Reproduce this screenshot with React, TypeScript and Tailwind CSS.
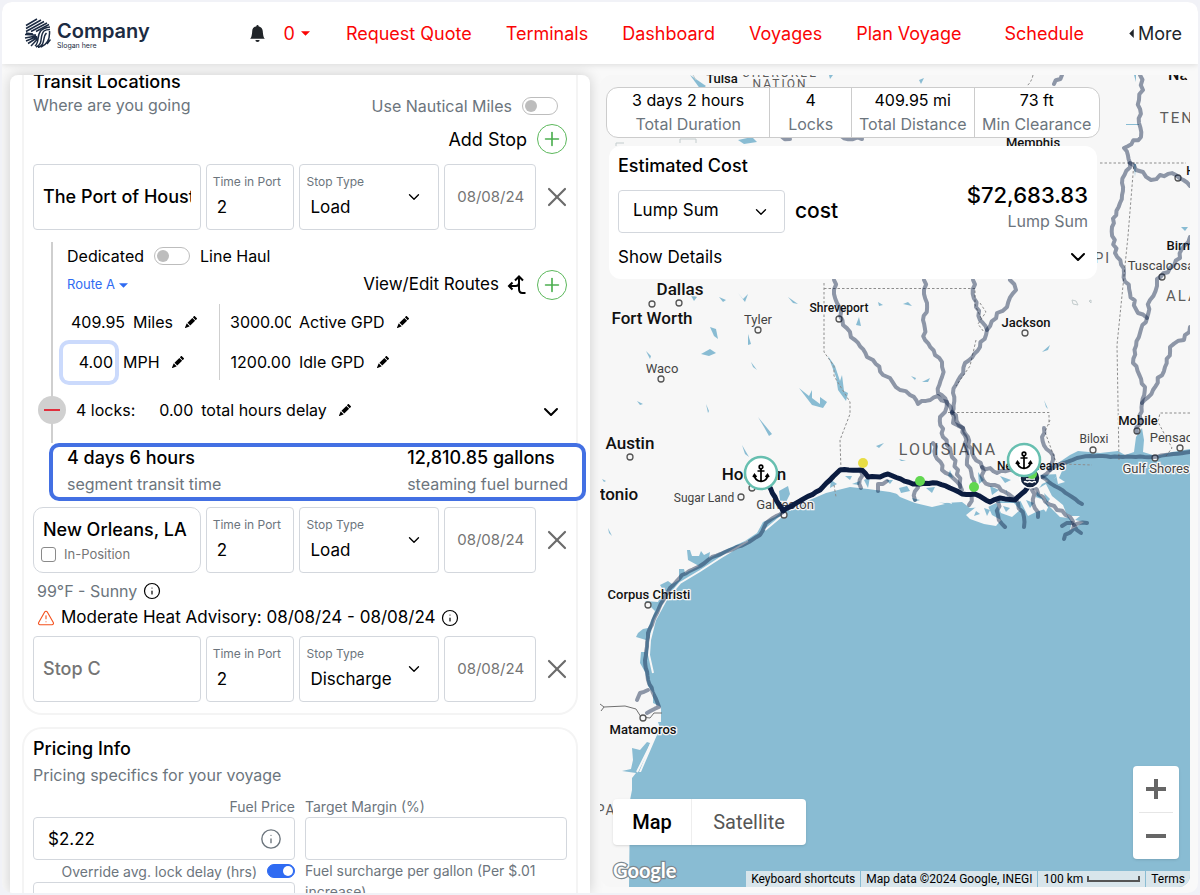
import { useState, type ReactNode } from 'react';
import clsx from 'clsx';
import { BsBellFill, BsPencilFill } from 'react-icons/bs';
import { ChevronDown, Info, Plus, TriangleAlert, X } from 'lucide-react';

type Point = [number, number];

const NAV_LINKS = ['Request Quote', 'Terminals', 'Dashboard', 'Voyages', 'Plan Voyage', 'Schedule'];

const STATS = [
  { value: '3 days 2 hours', label: 'Total Duration' },
  { value: '4', label: 'Locks' },
  { value: '409.95 mi', label: 'Total Distance' },
  { value: '73 ft', label: 'Min Clearance' },
];

/* ---------- small controls ---------- */

function Toggle({ label, on = false, small = false }: { label: string; on?: boolean; small?: boolean }) {
  const [checked, setChecked] = useState(on);
  return (
    <span className={clsx('relative inline-flex shrink-0', small ? 'h-3.5 w-7' : 'h-[18px] w-9')}>
      <input
        type="checkbox"
        role="switch"
        aria-label={label}
        checked={checked}
        onChange={(e) => setChecked(e.target.checked)}
        className="h-full w-full cursor-pointer appearance-none rounded-full border border-[#bdbdbd] bg-white checked:border-[#2f6bf2] checked:bg-[#2f6bf2]"
      />
      <span
        className={clsx(
          'pointer-events-none absolute rounded-full',
          small ? 'top-0.5 size-2.5' : 'top-[3px] size-3',
          checked ? 'right-0.5 bg-white' : 'left-[3px] bg-[#bdbdbd]'
        )}
      />
    </span>
  );
}

function AddButton({ label }: { label: string }) {
  return (
    <button
      aria-label={label}
      className="flex size-[30px] shrink-0 items-center justify-center rounded-full border border-[#5cb85c] text-[#4caf50]"
    >
      <Plus size={22} strokeWidth={1.8} />
    </button>
  );
}

function Caret({ className }: { className?: string }) {
  return (
    <svg viewBox="0 0 10 5" className={clsx('h-[5px] w-[9px] fill-current', className)} aria-hidden>
      <path d="M0 0h10L5 5z" />
    </svg>
  );
}

function EditableValue({ value, unit, width, focused }: { value: string; unit: string; width: string; focused?: boolean }) {
  return (
    <label className="flex items-center">
      <input
        defaultValue={value}
        aria-label={unit}
        className={clsx(
          'bg-transparent text-right text-[16px] outline-none',
          width,
          focused && 'h-[37px] rounded-md pr-0.5 ring-4 ring-[#cbdafc]'
        )}
      />
      <span className="ml-2 whitespace-nowrap">{unit}</span>
      <BsPencilFill size={12} className="ml-3" aria-hidden />
    </label>
  );
}

/* ---------- stops ---------- */

interface StopProps {
  name?: string;
  placeholder?: string;
  type: string;
  inPosition?: boolean;
}

function StopRow({ name, placeholder, type, inPosition }: StopProps) {
  const box = 'h-[66px] min-w-0 rounded border border-[#d3d7dd]';
  return (
    <div className="grid grid-cols-[168fr_89fr_140fr_92fr_25fr] items-center gap-[5px]">
      <div className={clsx(box, 'flex flex-col justify-center px-[9px]', inPosition && 'rounded-[10px] pt-1')}>
        <input
          defaultValue={name}
          placeholder={placeholder}
          aria-label="Stop name"
          className="w-full min-w-0 bg-transparent text-[18px] leading-6 font-medium outline-none placeholder:text-[#757575]"
        />
        {inPosition && (
          <label className="flex items-center gap-2 text-[13px] leading-6 text-[#757575]">
            <input
              type="checkbox"
              className="-ml-0.5 size-[15px] appearance-none rounded-[3px] border border-[#8a8a8a] bg-white checked:bg-[#2f6bf2]"
            />
            In-Position
          </label>
        )}
      </div>
      <label className={clsx(box, 'flex flex-col px-1.5 pt-2')}>
        <span className="text-[12px] leading-[18px] whitespace-nowrap text-[#6c757d]">Time in Port</span>
        <input defaultValue="2" className="w-full px-1 text-[17px] leading-8 outline-none" />
      </label>
      <label className={clsx(box, 'relative flex flex-col px-1.5 pt-2')}>
        <span className="text-[12px] leading-[18px] text-[#6c757d]">Stop Type</span>
        <select defaultValue={type} className="w-full appearance-none bg-transparent px-1 text-[17px] leading-8 outline-none">
          <option>Load</option>
          <option>Discharge</option>
        </select>
        <ChevronDown size={18} strokeWidth={1.8} className="pointer-events-none absolute top-[23px] right-[15px]" />
      </label>
      <div className={clsx(box, 'flex items-center')}>
        <input
          defaultValue="08/08/24"
          aria-label="Date"
          className="w-full min-w-0 pl-3 text-[15px] text-[#757575] outline-none"
        />
      </div>
      <button aria-label="Remove stop" className="-mr-1.5 flex justify-end text-[#6b6b6b]">
        <X size={32} strokeWidth={1.6} className="shrink-0" />
      </button>
    </div>
  );
}

function Segment() {
  return (
    <div className="relative pt-3 pl-[34px] text-[16px]">
      <div className="absolute top-3 bottom-0 left-[18px] w-0.5 bg-[#cfcfcf]" />
      <div className="flex h-7 items-center gap-2.5 text-[16px]">
        <span>Dedicated</span>
        <Toggle label="Dedicated or line haul" />
        <span>Line Haul</span>
      </div>
      <div className="flex h-[30px] items-center justify-between">
        <button className="flex items-center gap-1 text-[13px] text-[#2f6bf2]">
          Route A
          <Caret className="w-2" />
        </button>
        <div className="flex items-center gap-2.5">
          <a href="#routes" className="flex items-center gap-2 text-[17px]">
            View/Edit Routes
            <svg viewBox="0 0 20 20" className="size-5 fill-none stroke-black stroke-2" aria-hidden>
              <path d="M12 2V14C12 17 13 18 15.500 18H18.500M8 5.500L12 1.500L16 5.500M12 7.500C12 10 11 11 8.500 11H2M5.500 7.500L2 11L5.500 14.500" />
            </svg>
          </a>
          <AddButton label="Add route" />
        </div>
      </div>
      <div className="mt-0.5 flex">
        <div className="mt-0.5 mb-2 -ml-1 flex h-[76px] w-[157px] flex-col justify-between border-r border-[#cfcfcf]">
          <div className="flex h-9 items-center">
            <EditableValue value="409.95" unit="Miles" width="w-[62px] pl-2" />
          </div>
          <div className="flex h-9 items-center">
            <EditableValue value="4.00" unit="MPH" width="w-[52px]" focused />
          </div>
        </div>
        <div className="ml-2.5 flex h-20 flex-col justify-between">
          <div className="flex h-10 items-center">
            <EditableValue value="3000.00" unit="Active GPD" width="w-[61px]" />
          </div>
          <div className="flex h-10 items-center">
            <EditableValue value="1200.00" unit="Idle GPD" width="w-[61px]" />
          </div>
        </div>
      </div>
      <div className="relative -ml-7 flex h-[55px] items-center pb-3">
        <button
          aria-label="Remove segment"
          className="-ml-px flex size-7 shrink-0 items-center justify-center rounded-full bg-[#d0d0d0]"
        >
          <span className="h-0.5 w-4 bg-[#e02f3d]" />
        </button>
        <span className="ml-2.5">4 locks:</span>
        <span className="ml-[22px]">
          <EditableValue value="0.00" unit="total hours delay" width="w-9" />
        </span>
        <button aria-label="Show locks" className="ml-auto pt-1 pr-1">
          <ChevronDown size={24} />
        </button>
      </div>
    </div>
  );
}

function SegmentSummary() {
  return (
    <div className="relative -mr-[19px] mb-1.5 ml-4 flex h-[58px] items-center justify-between rounded-[10px] border-4 border-[#4370e3] bg-white px-3.5">
      <div>
        <div className="text-[18px] leading-6 font-medium">4 days 6 hours</div>
        <div className="text-[16px] leading-7 text-[#6c757d]">segment transit time</div>
      </div>
      <div>
        <div className="text-[18px] leading-6 font-medium">12,810.85 gallons</div>
        <div className="text-[16px] leading-7 text-[#6c757d]">steaming fuel burned</div>
      </div>
    </div>
  );
}

function TransitLocations() {
  return (
    <section className="rounded-b-[20px] border-2 border-t-0 border-[#f4f4f4] px-[9px] pb-[11px]">
      <div className="flex items-start justify-between">
        <div>
          <h2 className="text-[18px] leading-3.5 font-medium">Transit Locations</h2>
          <p className="mt-1 text-[16px] leading-6 text-[#6c757d]">Where are you going</p>
        </div>
        <div className="mt-[17px] mr-[9px] flex items-center gap-2.5 text-[16px] leading-7 text-[#6c757d]">
          Use Nautical Miles
          <Toggle label="Use Nautical Miles" />
        </div>
      </div>
      <div className="mt-1 mb-2.5 flex items-center justify-end gap-2.5 text-[18px]">
        Add Stop
        <AddButton label="Add stop" />
      </div>
      <StopRow name="The Port of Houston" type="Load" />
      <Segment />
      <SegmentSummary />
      <StopRow name="New Orleans, LA" type="Load" inPosition />
      <div className="mt-1 ml-1 flex h-7 items-center gap-1.5 text-[16px] text-[#6c757d]">
        99°F - Sunny
        <Info size={18} strokeWidth={1.6} className="text-black" />
      </div>
      <div className="mb-1.5 ml-1 flex h-[25px] items-center gap-1.5 text-[17px] whitespace-nowrap">
        <TriangleAlert size={18} strokeWidth={1.5} className="text-[#f4511e]" />
        Moderate Heat Advisory: 08/08/24 - 08/08/24
        <Info size={18} strokeWidth={1.6} />
      </div>
      <StopRow placeholder="Stop C" type="Discharge" />
    </section>
  );
}

function PricingInfo() {
  const input = 'h-[43px] w-full rounded border border-[#d3d7dd] text-[17px] outline-none';
  return (
    <section className="mt-3 rounded-t-[20px] border-2 border-b-0 border-[#f4f4f4] px-[9px] pt-2">
      <h2 className="text-[18px] leading-6 font-medium">Pricing Info</h2>
      <p className="mt-0.5 text-[16px] leading-6 text-[#6c757d]">Pricing specifics for your voyage</p>
      <div className="mt-2.5 grid grid-cols-2 gap-x-2.5 text-[14px] text-[#6c757d]">
        <label htmlFor="fuel-price" className="text-right leading-5">Fuel Price</label>
        <label htmlFor="margin" className="leading-5">Target Margin (%)</label>
        <div className="relative">
          <input id="fuel-price" defaultValue="$2.22" className={clsx(input, 'px-3.5 text-black')} />
          <Info size={22} strokeWidth={1.5} className="absolute top-[11px] right-[13px]" />
        </div>
        <input id="margin" className={clsx(input, 'px-3.5 text-black')} />
        <div className="flex h-[22px] items-center justify-end gap-2.5">
          <label htmlFor="lock-delay">Override avg. lock delay (hrs)</label>
          <Toggle label="Override avg. lock delay" on small />
        </div>
        <label htmlFor="surcharge" className="row-span-2 leading-[21px]">
          Fuel surcharge per gallon (Per $.01 increase)
        </label>
        <input id="lock-delay" className={clsx(input, 'px-3.5')} />
        <span />
        <input id="surcharge" className={clsx(input, 'px-3.5')} />
      </div>
    </section>
  );
}

/* ---------- map ---------- */

// Adds bends between the points so that rivers do not look like straight segments.
function meander(points: Point[], amp = 3): string {
  const out: Point[] = [];
  let n = 1;
  points.forEach((p, i) => {
    out.push(p);
    const next = points[i + 1];
    if (!next) return;
    const dx = next[0] - p[0];
    const dy = next[1] - p[1];
    const len = Math.hypot(dx, dy) || 1;
    const steps = Math.floor(len / 4);
    for (let k = 1; k < steps; k++) {
      n = (n * 73 + 41) % 101;
      const off = (n / 101 - 0.5) * amp;
      out.push([p[0] + (dx * k) / steps - (dy / len) * off, p[1] + (dy * k) / steps + (dx / len) * off]);
    }
  });
  return out.map(([x, y]) => `${x.toFixed(1)},${y.toFixed(1)}`).join(' ');
}

const RIVERS: Point[][] = [
  [[924, 280], [927, 303], [923, 320], [925, 340], [935, 355], [942, 362], [942, 377], [938, 393], [947, 403], [952, 412], [953, 423], [963, 428], [968, 437], [972, 453], [982, 467], [997, 473], [1015, 471], [1027, 476]],
  [[973, 280], [976, 307], [980, 320], [987, 330]],
  [[1010, 280], [1016, 290], [1007, 307], [997, 313], [987, 330], [980, 347], [965, 363], [960, 377], [953, 393], [952, 413]],
  [[834, 280], [837, 303], [843, 325], [855, 340], [867, 357], [873, 360], [883, 375], [890, 378], [900, 390], [910, 395], [918, 404], [938, 396], [947, 402], [945, 412], [940, 417], [943, 437], [952, 457], [958, 470], [960, 487]],
  [[952, 412], [963, 428], [967, 460], [972, 477], [974, 487], [969, 505]],
  [[933, 443], [942, 470], [953, 478], [962, 490]],
  [[982, 467], [983, 480], [1005, 492], [1018, 503], [1024, 517], [1024, 527]],
  [[998, 502], [998, 515], [1005, 527]],
  [[1032, 490], [1038, 517]],
  [[917, 483], [915, 500]],
  [[1032, 487], [1043, 497], [1057, 510], [1070, 517], [1074, 525], [1087, 523]],
  [[1064, 539], [1074, 525], [1081, 533]],
  [[1062, 526], [1072, 523]],
  [[1044, 428], [1042, 437], [1053, 460], [1050, 470], [1042, 477]],
  [[1140, 75], [1143, 90], [1139, 100], [1139, 123], [1141, 137], [1124, 148], [1130, 163], [1122, 183], [1120, 203], [1112, 227], [1115, 253], [1124, 273], [1130, 293], [1138, 313], [1147, 318], [1140, 333], [1133, 363], [1145, 387], [1142, 403], [1137, 432]],
  [[1190, 237], [1184, 246], [1180, 258], [1170, 268], [1157, 279], [1157, 286], [1150, 300], [1147, 318]],
  [[1190, 327], [1184, 340], [1170, 347], [1165, 367], [1153, 390], [1142, 403]],
  [[1130, 163], [1136, 170], [1143, 172], [1151, 180], [1160, 175], [1176, 175], [1190, 186]],
  [[861, 471], [861, 488]],
  [[887, 481], [878, 484], [878, 491]],
  [[1062, 75], [1054, 84]],
  [[775, 136], [790, 139]],
  [[835, 136], [862, 139]],
];

const COASTAL: Point[][] = [
  [[1042, 477], [1082, 504]],
  [[1050, 470], [1060, 464], [1077, 458], [1090, 456], [1123, 457], [1153, 457], [1190, 452]],
  [[783, 512], [766, 523], [760, 535], [745, 544], [725, 552], [712, 557], [700, 566], [682, 575], [670, 588], [659, 608], [648, 633], [645, 660], [648, 680], [659, 707], [647, 713]],
  [[648, 690], [640, 693], [637, 700]],
];

const ROUTE: Point[] = [
  [768, 485], [775, 497], [783, 511], [800, 501], [820, 490], [830, 480], [840, 470], [862, 470], [868, 477], [880, 477], [888, 474], [913, 484], [937, 483], [950, 488], [962, 494], [975, 494], [990, 502], [1000, 498], [1015, 500], [1025, 491], [1031, 482],
];

const LAKES = [
  '690,294 697,297 694,301', '719,297 726,300 723,302', '738,293 743,299 748,294 745,302',
  '710,327 716,329 718,339 714,336', '701,354 710,349 716,353 709,356', '646,351 651,356 650,359',
  '748,334 751,344 748,345', '751,362 757,370 753,367', '788,297 798,304 793,303',
  '799,388 809,396 812,390 812,398 820,404 820,397 827,402 823,408 812,405', '758,417 772,434 769,436 764,427',
  '742,445 749,457 745,454', '637,401 643,404 640,405', '706,404 709,411 708,413',
  '859,317 861,326 856,325', '878,302 883,305 879,306', '828,356 835,366 840,381 842,375 844,391 848,393 846,401 838,390 836,377',
  '602,479 606,481 604,482', '903,304 908,302 912,306', '911,376 916,378 915,380', '922,382 930,378 928,382',
  '1042,352 1050,345 1048,350', '1044,400 1048,409 1046,407', '690,75 706,86 701,90',
  '829,75 833,75 830,79', '919,80 924,78 921,84', '1181,227 1188,227 1185,231', '738,140 752,137 757,142 744,144',
  '899,459 906,461 901,461', '1126,124 1139,124 1139,125 1126,125', '1134,75 1136,75 1136,82', '1134,164 1136,164 1135,177', '876,446 884,443 879,448',
  '845,476 852,476 850,480', '852,484 860,481 859,485', '864,480 870,477 868,488', '831,480 837,484 830,488', '886,480 893,480 890,484',
  '899,488 907,486 910,491 901,493', '926,488 935,487 932,493', '950,470 953,478 948,476', '1000,476 1011,480 1005,483',
  '608,528 612,536 609,533', '1037,475 1060,474 1050,482', '978,472 984,480 979,484', '990,486 999,490 992,495', '1006,490 1013,493 1008,498',
];

const MARSH = [
  '895,492 915,497 930,499 945,504 932,507 915,503 900,497', '944,501 950,498 952,504', '966,515 976,507 988,506 992,515 1001,520 996,526 984,524 970,519',
  '996,503 1014,503 1020,510 1012,517 1001,513', '1020,500 1030,495 1044,500 1048,508 1036,512 1028,516', '1036,490 1046,484 1052,496 1063,505 1068,518 1060,517 1048,505',
  '1056,474 1062,471 1059,478 1065,482 1058,484', '1066,513 1072,516 1080,516 1075,520 1084,522 1076,527 1070,530 1072,522', '1040,505 1048,507 1046,512',
  '1006,487 1020,492 1018,499 1008,498', '1030,494 1037,492 1035,500',
];

const MARSH_WATER = [
  '984,508 990,510 987,516', '1003,506 1010,508 1006,512', '1026,500 1034,503 1030,508', '1044,493 1050,499 1047,503', '976,511 980,514 974,516', '912,498 920,500 914,502',
];

const BORDERS = [
  'M824 283V352L834 366V376L850 402V414L840 440L841 470', 'M824 288.500H975V305L982 320M976 340L970 366L956 386',
  'M948 412.500H1049V425M1050 420L1045 432L1056 462L1062 464L1092 465', 'M1134 162L1128 236L1117 345L1119 460',
  'M1100 163H1186', 'M1190 413H1160L1158 422L1172 448L1166 456', 'M1033 75C1032 80 1030 83 1027 86', 'M834 485L836 497', 'M980 303L986 312L978 324L984 332',
];

interface MapLabel {
  text: string;
  x: number;
  y: number;
  size: number;
  kind?: 'city' | 'town' | 'state';
}

const LABELS: MapLabel[] = [
  { text: 'Tulsa', x: 722, y: 83, size: 13 },
  { text: 'Dallas', x: 680, y: 295, size: 17 },
  { text: 'Fort Worth', x: 652, y: 324, size: 17 },
  { text: 'Tyler', x: 758, y: 324, size: 13, kind: 'town' },
  { text: 'Shreveport', x: 839, y: 312, size: 12 },
  { text: 'Waco', x: 662, y: 373, size: 13, kind: 'town' },
  { text: 'Jackson', x: 1026, y: 327, size: 13 },
  { text: 'Austin', x: 630, y: 449, size: 17 },
  { text: 'tonio', x: 619, y: 500, size: 17 },
  { text: 'Houston', x: 754, y: 480, size: 17 },
  { text: 'Sugar Land', x: 704, y: 502, size: 12, kind: 'town' },
  { text: 'Galveston', x: 785, y: 509, size: 13, kind: 'town' },
  { text: 'New Orleans', x: 1031, y: 470, size: 12 },
  { text: 'Biloxi', x: 1094, y: 443, size: 12, kind: 'town' },
  { text: 'Mobile', x: 1138, y: 425, size: 13 },
  { text: 'Pensacola', x: 1180, y: 442, size: 13, kind: 'town' },
  { text: 'Gulf Shores', x: 1156, y: 473, size: 13, kind: 'town' },
  { text: 'Corpus Christi', x: 649, y: 599, size: 13 },
  { text: 'Matamoros', x: 643, y: 734, size: 13 },
  { text: 'Memphis', x: 1033, y: 147, size: 13 },
  { text: 'Tuscaloosa', x: 1161, y: 270, size: 13, kind: 'town' },
  { text: 'Birmingham', x: 1202, y: 250, size: 13 },
  { text: 'Nashville', x: 1201, y: 80, size: 16 },
  { text: 'Huntsville', x: 1213, y: 175, size: 12 },
  { text: 'CHEROKEE', x: 780, y: 77, size: 12, kind: 'state' },
  { text: 'NATION', x: 780, y: 88, size: 12, kind: 'state' },
  { text: 'LOUISIANA', x: 948, y: 455, size: 16, kind: 'state' },
  { text: 'MISSISSIPPI', x: 1061, y: 263, size: 14, kind: 'state' },
  { text: 'TENNESSEE', x: 1210, y: 123, size: 15, kind: 'state' },
  { text: 'ALABAMA', x: 1208, y: 301, size: 15, kind: 'state' },
  { text: 'TAMAULIPAS', x: 575, y: 815, size: 14, kind: 'state' },
];

const TOWNS: Point[] = [
  [652, 304], [679, 303], [758, 330], [839, 319], [661, 379], [1025, 333], [630, 457], [741, 497], [784, 515], [752, 488], [1093, 450],
  [1137, 431], [1180, 448], [1155, 458], [648, 605], [643, 718], [1162, 277], [1178, 178],
];

function PortMarker({ x, y }: { x: number; y: number }) {
  return (
    <g transform={`translate(${x} ${y})`}>
      <circle r="16" fill="#fff" stroke="#67bfb0" strokeWidth="2.500" />
      <g fill="none" stroke="#000" strokeWidth="1.700">
        <circle cy="-6" r="1.800" />
        <path d="M0 -4V8M-3.500 -2H3.500M-6.500 2C-6.500 6 -3.500 8 0 8.500C3.500 8 6.500 6 6.500 2M-8 4L-6.500 1.500L-4.500 4M8 4L6.500 1.500L4.500 4" />
      </g>
    </g>
  );
}

function MapCanvas() {
  return (
    <svg
      viewBox="600 75 590 812"
      preserveAspectRatio="xMinYMin slice"
      className="absolute inset-0 h-full w-full"
      role="img"
      aria-label="Map of the Gulf coast with the planned route"
    >
      <path
        fill="#89bcd3"
        d="M629 887L630 800L632 790L632 778L636 773L622 771L631 769L633 760L632 748L640 750L647 742L650 743L644 760L639 772L641 772L660 728L658 722L661 722L661 707L653 703L653 693L648 686L645 672L640 663L641 652L645 652L646 640L636 637L638 633L643 629L648 628L655 611L645 601L658 602L663 590L660 585L668 581L672 584L679 580L679 569L684 569L685 573L699 566L688 560L687 550L690 550L692 556L699 556L701 551L704 555L710 552L709 558L725 550L745 541L757 533L763 522L775 517L783 511L780 500L779 491L788 486L790 494L784 506L790 511L805 502L826 493L850 487L868 489L890 492L905 496L921 501L945 503L962 502L970 508L988 507L1000 501L1018 502L1034 496L1042 484L1055 478L1062 471L1058 463L1070 455L1078 451L1100 453L1118 451L1125 455L1134 452L1136 437L1142 428L1144 440L1143 452L1156 456L1172 452L1190 449V887Z"
      />
      <g fill="#89bcd3">
        {LAKES.map((p) => <polygon key={p} points={p} />)}
      </g>
      <g fill="#f7f7f7">
        {MARSH.map((p) => <polygon key={p} points={p} />)}
      </g>
      <g fill="#89bcd3">
        {MARSH_WATER.map((p) => <polygon key={p} points={p} />)}
      </g>
      <path
        d="M783 515L765 530M748 541L720 558L700 571L680 583L667 598L655 620L650 640L649 655L653 673M659 728L644 758L637 772"
        fill="none"
        stroke="#f7f7f7"
        strokeWidth="2"
      />
      <g fill="none" stroke="#8d8d8d" strokeWidth="1" strokeDasharray="2.500 2">
        {BORDERS.map((d) => <path key={d} d={d} />)}
      </g>
      <path d="M600 704L604 707L601 711M604 707L625 706L636 709L641 717L650 718L654 713H662" fill="none" stroke="#707070" />
      <path d="M616 146V143H624M680 143V139H696V143M693 75L696 80M1072 300l4 1l2 4l-5 -1zM1091 300l-2 1l2 2z" fill="none" stroke="#c3cccd" />

      <g>
        {LABELS.map(({ text, x, y, size, kind = 'city' }) => (
          <text
            key={text}
            x={x}
            y={y}
            textAnchor="middle"
            fontSize={size}
            className={clsx(
              "font-['Roboto',sans-serif] [paint-order:stroke]",
              kind === 'city' && 'font-medium',
              kind === 'state' && 'tracking-[2px]'
            )}
            fill={kind === 'city' ? '#111' : kind === 'town' ? '#444' : '#5c5c5c'}
            stroke="#f7f7f7"
            strokeWidth="2.500"
          >
            {text}
          </text>
        ))}
      </g>
      <g fill="#f7f7f7" stroke="#555" strokeWidth="1.300">
        {TOWNS.map(([x, y]) => <circle key={`${x}-${y}`} cx={x} cy={y} r="3" />)}
      </g>

      <g fill="none" stroke="#0b1f45" strokeOpacity="0.450" strokeWidth="4" strokeLinejoin="round" strokeLinecap="round">
        {RIVERS.map((r, i) => <polyline key={i} points={meander(r, 4)} />)}
        {COASTAL.map((r, i) => <polyline key={i} points={meander(r, 1)} />)}
      </g>
      <polyline points={meander(ROUTE, 1)} fill="none" stroke="#0b1c40" strokeWidth="5" strokeLinejoin="round" />

      <circle cx="863" cy="463" r="5" fill="#e8dd45" />
      <circle cx="920" cy="481" r="5" fill="#62d750" />
      <circle cx="974" cy="487" r="5" fill="#62d750" />
      <circle cx="1030" cy="478" r="10" fill="#14233f" stroke="#fff" strokeWidth="1.500" />
      <path d="M1024 482c2 -1.500 3 1.500 4.500 0s3 1.500 4.500 0s2 0 3 0M1026 479h9" stroke="#fff" strokeWidth="1.500" fill="none" />
      <circle cx="1032" cy="474" r="5" fill="#62d750" />
      <PortMarker x={761} y={473} />
      <PortMarker x={1024} y={460} />
    </svg>
  );
}

function MapCell({ children }: { children: ReactNode }) {
  return <span className="flex h-4 items-center bg-[#d8e5eb] px-[5px]">{children}</span>;
}

function VoyageMap() {
  return (
    <section className="relative mb-1.5 flex flex-col overflow-hidden rounded-xl bg-[#f7f7f7]">
      <MapCanvas />

      <div className="relative mt-3 mr-[90px] ml-1.5 grid grid-cols-[164fr_82fr_123fr_125fr] divide-x divide-[#ccc] rounded-xl border border-[#ccc] bg-white">
        {STATS.map((s) => (
          <div key={s.label} className="pb-px text-center text-[16px] leading-6 whitespace-nowrap">
            <div>{s.value}</div>
            <div className="text-[#6c757d]">{s.label}</div>
          </div>
        ))}
      </div>

      <div className="relative mt-2 mr-[93px] ml-[9px] rounded-xl bg-white px-[9px] pt-2 pb-2">
        <h2 className="text-[18px] leading-6 font-medium">Estimated Cost</h2>
        <div className="mt-[11px] flex items-center justify-between">
          <div className="flex items-center gap-2.5">
            <div className="relative">
              <select
                aria-label="Cost type"
                className="h-[43px] w-[167px] appearance-none rounded border border-[#d3d7dd] bg-white px-3.5 text-[17px] outline-none"
              >
                <option>Lump Sum</option>
              </select>
              <ChevronDown size={18} strokeWidth={1.8} className="pointer-events-none absolute top-[13px] right-[15px]" />
            </div>
            <span className="text-[21px] leading-6 font-medium">cost</span>
          </div>
          <div className="-mt-2 text-right">
            <div className="text-[22px] leading-7 font-medium">$72,683.83</div>
            <div className="text-[16px] leading-6 text-[#6c757d]">Lump Sum</div>
          </div>
        </div>
        <button className="mt-2.5 flex w-full items-center justify-between text-[17px] leading-7">
          Show Details
          <ChevronDown size={24} className="-mr-0.5" />
        </button>
      </div>

      <div className="relative mt-auto flex items-end justify-between pr-[11px] pl-[13px]">
        <div className="mb-3.5 flex h-[46px] overflow-hidden rounded-sm bg-white font-['Roboto',sans-serif] text-[20px] shadow">
          <button className="w-[79px] border-r border-[#eee] font-medium">Map</button>
          <button className="w-[114px] text-[#565656]">Satellite</button>
        </div>
        <div className="flex h-[93px] w-[46px] flex-col items-center rounded-sm bg-white shadow">
          <button aria-label="Zoom in" className="flex flex-1 items-center">
            <svg viewBox="0 0 20 20" className="size-5 fill-[#666]" aria-hidden>
              <path d="M8 0h4v8h8v4h-8v8H8v-8H0V8h8z" />
            </svg>
          </button>
          <span className="h-px w-[34px] bg-[#e6e6e6]" />
          <button aria-label="Zoom out" className="flex flex-1 items-center">
            <svg viewBox="0 0 20 4" className="h-1 w-5 fill-[#666]" aria-hidden>
              <path d="M0 0h20v4H0z" />
            </svg>
          </button>
        </div>
      </div>
      <div className="relative flex h-7 items-end justify-between pl-3">
        <svg viewBox="0 0 70 28" className="h-7 w-[70px]" role="img" aria-label="Google">
          <text
            x="1"
            y="19"
            fontSize="20"
            fill="#fff"
            stroke="#7c8990"
            strokeWidth="2.500"
            className="font-['Lato',sans-serif] font-bold [paint-order:stroke]"
          >
            Google
          </text>
        </svg>
        <div className="flex gap-px font-['Roboto',sans-serif] text-[12px] whitespace-nowrap">
          <MapCell>Keyboard shortcuts</MapCell>
          <MapCell>Map data ©2024 Google, INEGI</MapCell>
          <MapCell>
            100 km
            <span className="ml-1 h-1.5 w-[53px] border-2 border-t-0 border-[#555]" />
          </MapCell>
          <MapCell>
            <a href="#terms">Terms</a>
          </MapCell>
        </div>
      </div>
    </section>
  );
}

/* ---------- header ---------- */

function Logo() {
  return (
    <a href="#home" className="flex items-center gap-1.5 text-[#1c2b42]">
      <svg viewBox="0 0 27 30" className="h-[30px] w-[27px] fill-none stroke-current stroke-[1.500]" aria-hidden>
        <path d="M2 7.500L13 1M2 10.500L17 2M2 13.500L20 3.500M7 13.500L23 5M12 13.500L25 6.500" />
        <path d="M1 16.500L12 17M1 20L12 18M2 23L13 18.500M4 25.500L13.500 19.500M7 28L14 20.500M2 15L9 16" />
        <path d="M11 28C16 24 12 18 17 12.500C19 10.500 22 9.500 26 9M12 29C20 26 15 18 20 13C22 11.500 24 11.500 26 11.500M14 29.500C22 27 18 19 22.500 15M17 29C24 26 26 20 25.500 13M23 26L26.500 21.500" />
      </svg>
      <span className="flex flex-col pt-1">
        <span className="text-[20px] leading-5 font-semibold">Company</span>
        <span className="text-[7px] leading-[9px]">Slogan here</span>
      </span>
    </a>
  );
}

function Header() {
  return (
    <header className="relative z-10 flex h-[62px] shrink-0 items-center justify-between bg-white pr-4 pl-[22px] text-[18px] whitespace-nowrap shadow-[0_1px_6px_rgba(0,0,0,0.12)]">
      <Logo />
      <nav className="flex items-center text-[#fa0505]">
        <button aria-label="Notifications" className="text-[#212529]">
          <BsBellFill size={17} />
        </button>
        <button className="ml-[18px] flex items-center gap-1.5">
          0
          <Caret />
        </button>
        {NAV_LINKS.map((link, i) => (
          <a key={link} href="#nav" className={clsx(i === 0 && 'ml-9', i > 0 && i < 5 && 'ml-[34px]', i === 5 && 'ml-[43px]')}>
            {link}
          </a>
        ))}
        <button className="ml-[45px] flex items-center gap-1 text-[#212529]">
          <svg viewBox="0 0 5 10" className="h-[9px] w-[5px] fill-current" aria-hidden>
            <path d="M5 0v10L0 5z" />
          </svg>
          More
        </button>
      </nav>
    </header>
  );
}

export default function App() {
  return (
    <div className="h-screen bg-[#f1f2f7] p-0.5 font-['Inter',sans-serif] text-black">
      <div className="flex h-full flex-col overflow-hidden rounded-[10px] bg-[#f9f9f9]">
        <Header />
        <main className="grid min-h-0 flex-1 grid-cols-[58fr_59fr] gap-2.5 px-2 pt-[11px]">
          <div className="min-w-0 overflow-hidden rounded-t-lg bg-white px-3 shadow-[0_0_14px_rgba(0,0,0,0.18)]">
            <TransitLocations />
            <PricingInfo />
          </div>
          <VoyageMap />
        </main>
      </div>
    </div>
  );
}
